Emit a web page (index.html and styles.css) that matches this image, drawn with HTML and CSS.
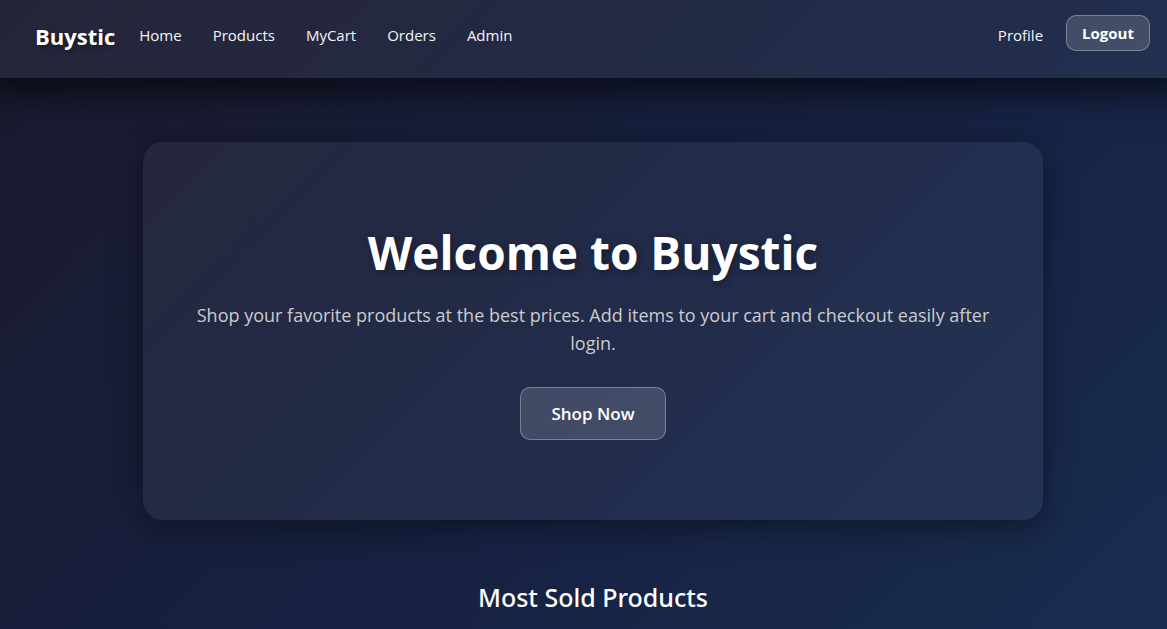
FILE: index.html
```html
<!DOCTYPE html>
<html lang="en">
<head>
<meta charset="utf-8">
<meta name="viewport" content="width=device-width, initial-scale=1">
<title>Buystic</title>
<link rel="stylesheet" href="styles.css">
</head>
<body>
<header class="navbar">
  <a class="brand" href="#">Buystic</a>
  <nav class="nav-links">
    <a class="nav-link" href="#">Home</a>
    <a class="nav-link" href="#">Products</a>
    <a class="nav-link" href="#">MyCart</a>
    <a class="nav-link" href="#">Orders</a>
    <a class="nav-link" href="#">Admin</a>
  </nav>
  <div class="account">
    <a class="nav-link" href="#">Profile</a>
    <button class="btn btn-logout" type="button">Logout</button>
  </div>
</header>
<main class="page">
  <section class="hero">
    <h1 class="hero-title">Welcome to Buystic</h1>
    <p class="hero-text">Shop your favorite products at the best prices. Add items to your cart and checkout easily after login.</p>
    <button class="btn btn-shop" type="button">Shop Now</button>
  </section>
  <h2 class="section-title">Most Sold Products</h2>
</main>
</body>
</html>
```
FILE: styles.css
```css
* {
  box-sizing: border-box;
}

body {
  margin: 0;
  min-height: 100vh;
  font-family: "Segoe UI", "Open Sans", "Noto Sans", sans-serif;
  color: #fff;
  background: linear-gradient(135deg, #1a1a2e 0%, #172142 55%, #192d50 100%);
}

.navbar {
  display: flex;
  align-items: flex-start;
  padding: 15px 17px 23px 35px;
  background: rgba(255, 255, 255, 0.05);
  box-shadow: 0 0 32px 16px rgba(0, 0, 0, 0.6);
}

.brand {
  margin-right: 24px;
  font-size: 22px;
  line-height: 36px;
  padding-top: 3px;
  margin-bottom: 1px;
  font-weight: 700;
  color: #fff;
  text-decoration: none;
  text-shadow: 2px 2px 4px rgba(0, 0, 0, 0.4);
}

.nav-links {
  display: flex;
  gap: 31px;
}

.nav-link {
  padding-top: 2px;
  font-size: 15px;
  line-height: 36px;
  color: #f5f5f5;
  text-decoration: none;
}

.account {
  display: flex;
  gap: 23px;
  margin-left: auto;
}

.btn {
  font-family: inherit;
  font-weight: 600;
  color: #fff;
  background: rgba(255, 255, 255, 0.15);
  border: 1px solid rgba(255, 255, 255, 0.3);
  border-radius: 10px;
  cursor: pointer;
}

.btn-logout {
  height: 36px;
  padding: 0 15px;
  font-size: 15px;
  font-weight: 700;
}

.page {
  padding: 64px 16px 16px 35px;
}

.hero {
  max-width: 900px;
  margin: 0 auto;
  padding: 78px 48px 80px;
  text-align: center;
  background: rgba(255, 255, 255, 0.05);
  border-radius: 20px;
  box-shadow: 0 8px 32px rgba(0, 0, 0, 0.4);
}

.hero-title {
  margin: 0 0 17px;
  font-size: 46px;
  line-height: 64px;
  font-weight: 700;
  text-shadow: 2px 2px 8px rgba(0, 0, 0, 0.4);
}

.hero-text {
  margin: 0 0 30px;
  font-size: 18px;
  line-height: 28px;
  color: #ccc;
}

.btn-shop {
  height: 53px;
  padding: 0 30px;
  font-size: 17px;
}

.section-title {
  margin: 59px 0 0;
  font-family: "Segoe UI", "Noto Sans", "Open Sans", sans-serif;
  font-size: 25px;
  line-height: 36px;
  font-weight: 500;
  text-align: center;
}
```
